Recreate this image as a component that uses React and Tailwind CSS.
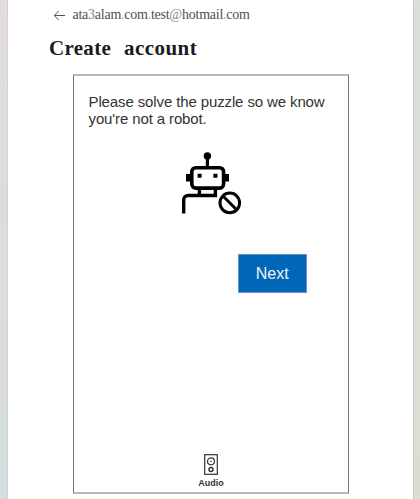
function BackArrow() {
  return (
    <svg className="h-[11px] w-[13px]" viewBox="0 0 13 11" fill="none" stroke="#555" strokeWidth="1">
      <path d="M1.2 5.5H12M5.8 1L1.2 5.5L5.8 10" />
    </svg>
  );
}

function RobotIcon() {
  return (
    <svg className="h-[64px] w-[62px]" viewBox="0 0 62 64" fill="none" stroke="#000" strokeWidth="3.6">
      <circle cx="26.4" cy="4.9" r="3.7" fill="#000" stroke="none" />
      <path d="M26.4 6V16" strokeWidth="3.2" />
      <rect x="10.8" y="16.7" width="31.8" height="20.4" rx="4" />
      <path d="M5 23h4v7.5H5zM44 23h4v7.5h-4z" fill="#000" stroke="none" />
      <path d="M16.6 22.8h4v4h-4zM32.4 22.8h4v4h-4z" fill="#000" stroke="none" />
      <path d="M18.4 37V44M34.4 37V44.5H7A4.3 4.3 0 0 0 2.7 48.8V62.4" strokeWidth="3.4" />
      <circle cx="48.8" cy="51.9" r="9.8" strokeWidth="3" />
      <path d="M42.2 45.3L55.4 58.5" strokeWidth="3" />
    </svg>
  );
}

function SpeakerIcon() {
  return (
    <svg className="h-[21px] w-[14px]" viewBox="0 0 14 21" fill="none" stroke="#333">
      <rect x="0.7" y="0.7" width="12.6" height="19.6" strokeWidth="1.2" />
      <circle cx="7" cy="7.3" r="3.5" strokeWidth="1.2" />
      <circle cx="7" cy="7.3" r="0.8" fill="#333" stroke="none" />
      <circle cx="7" cy="15.6" r="2" strokeWidth="1.5" />
    </svg>
  );
}

export default function App() {
  return (
    <div className="flex h-[499px] w-[420px] overflow-hidden bg-white">
      <div className="w-2 shrink-0 border-r border-[#cfd1d1] bg-linear-to-b from-[#e2dcda] to-[#d7dee1]" />
      <main className="flex w-[405px] shrink-0 flex-col bg-white pt-[6px]">
        <div className="flex h-[18px] items-center pl-[45px] font-['Liberation_Serif',serif] text-[14px] leading-[18px] tracking-[-0.25px] text-[#505050]">
          <span className="mt-px mr-[6.5px]"><BackArrow /></span>
          <span className="whitespace-nowrap">
            ata<span className="text-[#888]">3</span>alam<span className="text-[#aaa]">.</span>com<span className="text-[#aaa]">.</span>test<span className="text-[#888]">@</span>hotmail<span className="text-[#aaa]">.</span>com
          </span>
        </div>
        <h1 className="mt-[11px] flex h-[26px] gap-[13px] pl-[41px] font-['Liberation_Serif',serif] text-[21px] leading-[26px] font-bold text-[#1b1b1b]">
          <span className="tracking-[0.3px]">Create</span>
          <span className="tracking-[0.45px]">account</span>
        </h1>
        <section className="mt-[13px] ml-[65px] flex h-[420px] w-[276px] flex-col border-x border-y-2 border-x-[#777] border-y-[#b9b9b9] font-['Liberation_Sans',sans-serif]">
          <p className="mt-[18px] ml-[14.5px] text-[15px] leading-[16.5px] tracking-[-0.12px] whitespace-nowrap text-[#333]">
            Please solve the puzzle so we know<br />you're not a robot.
          </p>
          <div className="mt-[24px] ml-[107px]"><RobotIcon /></div>
          <button className="mt-[39px] mr-[41px] h-[39px] w-[69.5px] self-end border border-[#6c8fd2] bg-[#0067b8] text-[16px] text-[#eef4fb]">
            Next
          </button>
          <div className="mt-auto mb-[3px] flex flex-col items-center">
            <SpeakerIcon />
            <span className="mt-[2px] text-[9px] leading-[12px] font-bold text-[#333]">Audio</span>
          </div>
        </section>
      </main>
      <div className="flex-1 border-l border-[#cdd2cb] bg-linear-to-b from-[#d9dfd9] to-[#dcddd0]" />
    </div>
  );
}
